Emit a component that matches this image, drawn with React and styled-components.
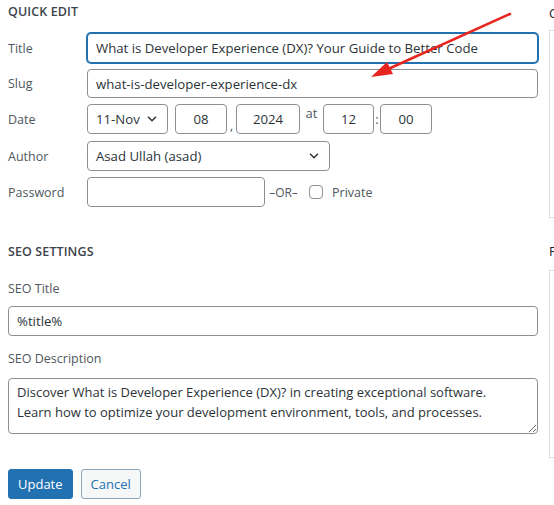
import React from 'react';
import styled, { createGlobalStyle } from 'styled-components';

const GlobalStyle = createGlobalStyle`
  body {
    margin: 0;
    background: #fff;
    font-family: "Open Sans", "Noto Sans", sans-serif;
    color: #1d2327;
    overflow: hidden;
  }
`;

const Page = styled.div`
  position: relative;
  display: flex;
  gap: 11px;
  width: 554px;
  height: 505px;
  overflow: hidden;
`;

const Main = styled.div`
  width: 538px;
  flex-shrink: 0;
  padding-left: 8px;
  box-sizing: border-box;
`;

const SectionTitle = styled.h3`
  margin: 0;
  font-size: 12.5px;
  font-weight: 600;
  letter-spacing: 0.1px;
  color: #3c434a;
  text-transform: uppercase;
  line-height: 16px;
  padding-top: ${(p) => p.top || 4}px;
  margin-bottom: ${(p) => p.bottom || 13}px;
`;

const Rows = styled.div`
  display: flex;
  flex-direction: column;
  gap: 6px;
`;

const Row = styled.div`
  display: flex;
  align-items: center;
  margin-top: ${(p) => p.mt || 0}px;
`;

const Label = styled.span`
  width: 79px;
  flex-shrink: 0;
  font-size: 12.5px;
  color: #50575e;
`;

const TextInput = styled.input`
  box-sizing: border-box;
  width: ${(p) => p.w || '100%'};
  flex: ${(p) => (p.w ? '0 0 auto' : '1 1 auto')};
  min-width: 0;
  height: ${(p) => p.h || 30}px;
  padding: 0 8px;
  border: 1px solid ${(p) => (p.focus ? '#2271b1' : '#8c8f94')};
  box-shadow: ${(p) => (p.focus ? '0 0 0 1px #2271b1' : 'none')};
  border-radius: 4px;
  font-family: inherit;
  font-size: 13.2px;
  color: #2c3338;
  background: #fff;
  text-align: ${(p) => (p.center ? 'center' : 'left')};
  outline: none;
`;

const SelectBox = styled.div`
  box-sizing: border-box;
  width: ${(p) => p.w}px;
  height: 30px;
  padding: 0 8px;
  border: 1px solid #8c8f94;
  border-radius: 4px;
  font-size: 13.2px;
  color: #2c3338;
  display: flex;
  align-items: center;
  justify-content: space-between;
  flex-shrink: 0;
`;

const Sep = styled.span`
  font-size: ${(p) => p.size || 12}px;
  color: #50575e;
  width: ${(p) => p.w}px;
  text-align: center;
  align-self: ${(p) => p.self || 'center'};
  flex-shrink: 0;
`;

const Check = styled.span`
  width: 14px;
  height: 14px;
  border: 1px solid #8c8f94;
  border-radius: 4px;
  margin: 0 9px 0 7px;
  box-sizing: border-box;
  flex-shrink: 0;
`;

const Private = styled.span`
  font-size: 12.5px;
  color: #50575e;
`;

const FieldLabel = styled.div`
  font-size: 12.5px;
  color: #50575e;
  margin-top: ${(p) => p.mt || 0}px;
  margin-bottom: ${(p) => p.mb || 9}px;
`;

const Area = styled.textarea`
  box-sizing: border-box;
  width: 100%;
  height: 56px;
  padding: 3px 8px;
  border: 1px solid #8c8f94;
  border-radius: 4px;
  font-family: inherit;
  font-size: 13px;
  line-height: 20px;
  color: #2c3338;
  display: block;
  resize: vertical;
  outline: none;
`;

const Buttons = styled.div`
  display: flex;
  gap: 8px;
  margin-top: 35px;
`;

const Button = styled.button`
  height: 30px;
  padding: 0 9px;
  border-radius: 3px;
  font-family: inherit;
  font-size: 13px;
  border: 1px solid ${(p) => (p.primary ? '#2271b1' : '#8ba7bd')};
  background: ${(p) => (p.primary ? '#2271b1' : '#f6f7f7')};
  color: ${(p) => (p.primary ? '#fff' : '#2271b1')};
`;

const Side = styled.div`
  flex: 1;
`;

const SideHead = styled.div`
  font-size: 13px;
  color: #1d2327;
  height: ${(p) => p.h}px;
  padding-top: ${(p) => p.pt}px;
  box-sizing: border-box;
`;

const SideBox = styled.div`
  height: ${(p) => p.h}px;
  border: 1px solid #dcdcde;
  border-right: none;
  box-sizing: border-box;
`;

const Arrow = styled.svg`
  position: absolute;
  left: 0;
  top: 0;
  pointer-events: none;
`;

const Chevron = () => (
  <svg width="14" height="14" viewBox="0 0 16 16" fill="none">
    <path d="M3.5 5.5 8 10l4.5-4.5" stroke="#2c3338" strokeWidth="1.7" />
  </svg>
);

const description =
  'Discover What is Developer Experience (DX)? in creating exceptional software.\nLearn how to optimize your development environment, tools, and processes.';

export default function App() {
  return (
    <>
      <GlobalStyle />
      <Page>
        <Main>
          <SectionTitle>Quick Edit</SectionTitle>
          <Rows>
            <Row>
              <Label>Title</Label>
              <TextInput
                focus
                readOnly
                value="What is Developer Experience (DX)? Your Guide to Better Code"
              />
            </Row>
            <Row>
              <Label>Slug</Label>
              <TextInput h={29} readOnly value="what-is-developer-experience-dx" />
            </Row>
            <Row>
              <Label>Date</Label>
              <SelectBox w={81}>
                11-Nov <Chevron />
              </SelectBox>
              <Sep w={7} />
              <TextInput w="52px" center readOnly value="08" />
              <Sep w={9} self="flex-end">,</Sep>
              <TextInput w="64px" center readOnly value="2024" />
              <Sep w={23} size={13} self="flex-start">at</Sep>
              <TextInput w="51px" center readOnly value="12" />
              <Sep w={6} size={13}>:</Sep>
              <TextInput w="52px" center readOnly value="00" />
            </Row>
            <Row mt={1}>
              <Label>Author</Label>
              <SelectBox w={243}>
                Asad Ullah (asad) <Chevron />
              </SelectBox>
            </Row>
            <Row>
              <Label>Password</Label>
              <TextInput w="178px" readOnly value="" />
              <Sep w={37} size={12}>–OR–</Sep>
              <Check />
              <Private>Private</Private>
            </Row>
          </Rows>

          <SectionTitle top={37} bottom={20}>SEO Settings</SectionTitle>
          <FieldLabel>SEO Title</FieldLabel>
          <TextInput readOnly value="%title%" />
          <FieldLabel mt={14} mb={11}>SEO Description</FieldLabel>
          <Area readOnly value={description} />
          <Buttons>
            <Button primary>Update</Button>
            <Button>Cancel</Button>
          </Buttons>
        </Main>

        <Side>
          <SideHead h={30} pt={4}>C</SideHead>
          <SideBox h={188} />
          <SideHead h={52} pt={24}>F</SideHead>
          <SideBox h={188} />
        </Side>

        <Arrow width="554" height="505">
          <line x1="510" y1="14" x2="386" y2="70" stroke="#e8261f" strokeWidth="2.5" strokeLinecap="round" />
          <polygon points="371,77 387,62 393,74" fill="#e8261f" />
        </Arrow>
      </Page>
    </>
  );
}
